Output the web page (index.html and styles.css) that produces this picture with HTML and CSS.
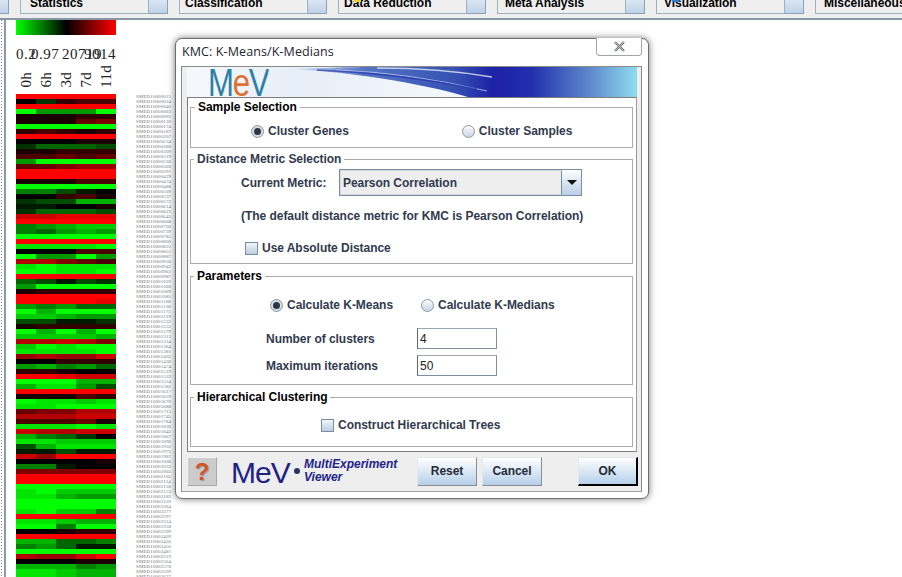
FILE: index.html
```html
<!DOCTYPE html>
<html lang="en">

<head>
    <meta charset="UTF-8">
    <title>KMC: K-Means/K-Medians</title>
    <link rel="stylesheet" href="styles.css">
</head>

<body>

    <div class="toolbar">
        <div class="tab-arrow tab-arrow--first"></div>
        <div class="tab"><div class="tab-box">Statistics</div><div class="tab-arrow"></div></div>
        <div class="tab"><div class="tab-box tab-box--narrow">Classification</div><div class="tab-arrow"></div></div>
        <div class="tab"><div class="tab-box tab-box--narrow"><i class="tab-icon tab-icon--yellow"></i>Data Reduction</div><div class="tab-arrow"></div></div>
        <div class="tab"><div class="tab-box tab-box--mid">Meta Analysis</div><div class="tab-arrow"></div></div>
        <div class="tab"><div class="tab-box tab-box--mid"><i class="tab-icon tab-icon--blue"></i>Visualization</div><div class="tab-arrow"></div></div>
        <div class="tab"><div class="tab-box tab-box--misc">Miscellaneous</div><div class="tab-arrow"></div></div>
    </div>

    <div class="workspace">
        <div class="side-strip"></div>
        <div class="viewer">
            <div class="scale-bar"></div>
            <div class="scale-values">
                <span>0.2</span>
                <span class="scale-value--mid">0.97</span>
                <span class="scale-value--mid2">20719</span>
                <span class="scale-value--end">9014</span>
            </div>
            <div class="sample-names">
                <span>0h</span><span>6h</span><span>3d</span><span>7d</span><span>11d</span>
            </div>
            <div class="heatmap-row">
                <div id="heatmap" class="heatmap"></div>
                <div id="genes" class="genes"></div>
            </div>
        </div>
    </div>

    <div class="dialog">
        <div class="dialog-title">KMC: K-Means/K-Medians</div>
        <div class="dialog-close">
            <svg width="13" height="11" viewBox="0 0 13 11">
                <path d="M2 1 L11 10 M11 1 L2 10" stroke="#6f7378" stroke-width="2.4" fill="none"/>
                <path d="M2 1 L11 10 M11 1 L2 10" stroke="#d9dcdf" stroke-width="0.7" fill="none"/>
            </svg>
        </div>

        <div class="dialog-body">
            <div class="banner">
                <svg class="banner-art" width="450" height="30" viewBox="0 0 450 30">
                    <defs>
                        <linearGradient id="bannerBg" x1="0" x2="1" y1="0" y2="0">
                            <stop offset="0" stop-color="#f6f9fc"/>
                            <stop offset="0.25" stop-color="#e6eef7"/>
                            <stop offset="0.6" stop-color="#f4f8fc"/>
                            <stop offset="1" stop-color="#ffffff"/>
                        </linearGradient>
                        <linearGradient id="bannerEnd" x1="0" x2="1" y1="0" y2="0">
                            <stop offset="0" stop-color="#1e22a6"/>
                            <stop offset="0.25" stop-color="#2130ad"/>
                            <stop offset="0.65" stop-color="#5c86cb"/>
                            <stop offset="1" stop-color="#8edcef"/>
                        </linearGradient>
                        <linearGradient id="swoosh" x1="0" x2="1" y1="0" y2="0">
                            <stop offset="0" stop-color="#dfe7f5"/>
                            <stop offset="0.3" stop-color="#5676c4"/>
                            <stop offset="0.7" stop-color="#3550b2"/>
                            <stop offset="0.85" stop-color="#1e22a6"/>
                        </linearGradient>
                    </defs>
                    <rect width="450" height="30" fill="url(#bannerBg)"/>
                    <path d="M105 2 C160 5 230 15 281 30 L340 30 L340 0 L190 0 C160 0 130 1 105 2 Z" fill="url(#swoosh)"/>
                    <path d="M150 3 C200 5 250 12 300 24" stroke="#b9cbec" stroke-width="1.2" fill="none" opacity="0.8"/>
                    <path d="M130 3 C180 5 230 10 290 22" stroke="#2733ab" stroke-width="1.6" fill="none" opacity="0.7"/>
                    <path d="M190 1 C230 1 270 4 305 10" stroke="#dfe8f6" stroke-width="1.5" fill="none" opacity="0.8"/>
                    <rect x="310" width="140" height="30" fill="url(#bannerEnd)"/>
                </svg>
                <div class="banner-logo"><span>M</span><span class="banner-logo-e">e</span><span>V</span></div>
            </div>

            <div class="panel">
                <fieldset class="group group--sample">
                    <legend class="group-title group-title--first">Sample Selection</legend>
                    <div class="radio-row radio-row--sample">
                        <label class="choice"><span class="radio radio--on"></span>Cluster Genes</label>
                        <label class="choice"><span class="radio"></span>Cluster Samples</label>
                    </div>
                </fieldset>

                <fieldset class="group group--distance">
                    <legend class="group-title group-title--slate">Distance Metric Selection</legend>
                    <div class="metric-row">
                        <span class="metric-label">Current Metric:</span>
                        <div class="combo">
                            <div class="combo-value">Pearson Correlation</div>
                            <div class="combo-button"><i class="combo-caret"></i></div>
                        </div>
                    </div>
                    <p class="metric-note">(The default distance metric for KMC is Pearson Correlation)</p>
                    <label class="choice choice--absolute"><span class="check"></span>Use Absolute Distance</label>
                </fieldset>

                <fieldset class="group group--params">
                    <legend class="group-title">Parameters</legend>
                    <div class="radio-row radio-row--params">
                        <label class="choice"><span class="radio radio--on"></span>Calculate K-Means</label>
                        <label class="choice"><span class="radio"></span>Calculate K-Medians</label>
                    </div>
                    <div class="field-row field-row--first">
                        <span class="field-label">Number of clusters</span>
                        <div class="field-input">4</div>
                    </div>
                    <div class="field-row">
                        <span class="field-label">Maximum iterations</span>
                        <div class="field-input">50</div>
                    </div>
                </fieldset>

                <fieldset class="group group--hier">
                    <legend class="group-title">Hierarchical Clustering</legend>
                    <label class="choice choice--hier"><span class="check"></span>Construct Hierarchical Trees</label>
                </fieldset>
            </div>

            <div class="footer">
                <div class="help-button">?</div>
                <div class="mev-logo">MeV</div>
                <div class="mev-dot"></div>
                <div class="mev-name">MultiExperiment<br>Viewer</div>
                <div class="button button--reset">Reset</div>
                <div class="button button--cancel">Cancel</div>
                <div class="button button--ok">OK</div>
            </div>
        </div>
    </div>

    <script src="script.js"></script>

</body>

</html>
```

FILE: styles.css
```css
* {
    box-sizing: border-box;
}

html,
body {
    margin: 0;
    height: 577px;
    overflow: hidden;
    background-color: #fff;
}

body {
    font-family: "Liberation Sans", Arial, sans-serif;
    font-size: 12px;
    font-weight: bold;
    letter-spacing: -0.04px;
    color: #323a4e;
    position: relative;
}

/* top toolbar, cut off by the top of the window */
.toolbar {
    display: flex;
    gap: 11px;
    align-items: flex-end;
    height: 20px;
    padding-bottom: 4px;
    background-color: #eeeeee;
    border-bottom: 2px solid #8797a6;
    overflow: hidden;
    white-space: nowrap;
}

.tab {
    display: flex;
    flex: none;
    width: 148px;
    height: 20px;
}

.tab-box {
    position: relative;
    width: 129px;
    padding-left: 9px;
    line-height: 18px;
    color: #000;
    background-color: #efefef;
    border: 1px solid #9db0c4;
    border-top: 0;
}

.tab-box--narrow {
    padding-left: 5px;
}

.tab-box--mid {
    padding-left: 7px;
}

.tab-box--misc {
    padding-left: 8px;
}

.tab-arrow {
    flex: none;
    width: 19px;
    height: 20px;
    background: linear-gradient(#e6eef6, #bed3e8);
    border: 1px solid #8ea2b6;
    border-left: 0;
}

.tab-arrow--first {
    width: 9px;
}

.tab-icon {
    position: absolute;
    top: 6px;
    left: 15px;
    width: 7px;
    height: 2px;
}

.tab-icon--yellow {
    background-color: #f2d21a;
}

.tab-icon--blue {
    background-color: #2f7fd0;
}

/* viewer behind the dialog */
.workspace {
    display: flex;
    height: 557px;
}

.side-strip {
    flex: none;
    width: 6px;
    border-right: 2px solid #8a99ab;
    background-image: linear-gradient(#8d8d8d 50%, transparent 50%);
    background-size: 1px 3px;
    background-repeat: repeat-y;
    background-position: 1px 0;
}

.viewer {
    padding-left: 10px;
    font-family: "Liberation Serif", "Times New Roman", serif;
    font-weight: normal;
    color: #222;
}

.scale-bar {
    width: 100px;
    height: 15px;
    background: linear-gradient(to right, #00ff00, #000 50%, #ff0000);
}

.scale-values {
    position: relative;
    width: 100px;
    height: 14px;
    margin-top: 12px;
    font-size: 15px;
    line-height: 14px;
    letter-spacing: 0.5px;
    white-space: nowrap;
}

.scale-values span {
    position: absolute;
    left: 0;
    top: 0;
}

.scale-values .scale-value--mid {
    left: 15px;
}

.scale-values .scale-value--mid2 {
    left: 46px;
}

.scale-values .scale-value--end {
    left: 68px;
}

.sample-names {
    display: flex;
    align-items: flex-end;
    width: 100px;
    height: 28px;
    margin-top: -1px;
}

.sample-names span {
    width: 20px;
    text-align: right;
    line-height: 20px;
    font-size: 15px;
    letter-spacing: 0.3px;
    writing-mode: vertical-rl;
    transform: rotate(180deg);
}

.heatmap-row {
    display: flex;
    gap: 20px;
    margin-top: 6px;
}

.heatmap {
    width: 100px;
}

.heat-row {
    display: flex;
    height: 5px;
}

.heat-cell {
    width: 20px;
}

.genes {
    font-size: 5px;
    line-height: 5px;
    letter-spacing: 0.1px;
    color: #777;
}

/* dialog window */
.dialog {
    position: absolute;
    left: 175px;
    top: 38px;
    width: 474px;
    height: 461px;
    padding: 27px 6px 6px 5px;
    background-color: #fff;
    border: 1px solid #6e6e6e;
    border-radius: 7px;
    box-shadow: 0 0 7px rgba(0, 0, 0, 0.55);
}

.dialog-title {
    position: absolute;
    left: 6px;
    top: 4px;
    font-family: "Open Sans", "Liberation Sans", sans-serif;
    font-size: 12.5px;
    font-weight: normal;
    letter-spacing: 0.1px;
    color: #1d2433;
}

.dialog-close {
    position: absolute;
    top: -1px;
    right: 6px;
    display: flex;
    align-items: center;
    justify-content: center;
    width: 46px;
    height: 18px;
    background-color: #fff;
    border: 1px solid #a5a5a5;
    border-top: 0;
    border-radius: 0 0 4px 4px;
}

.dialog-body {
    height: 426px;
    padding: 0 4px 0 5px;
    background-color: #eeeeee;
    border: 1px solid #8a8a8a;
    border-bottom-color: #a0a0a0;
}

.banner {
    position: relative;
    height: 30px;
}

.banner-art {
    display: block;
}

.banner-logo {
    position: absolute;
    left: 21px;
    top: -3px;
    height: 32px;
    font-size: 38px;
    line-height: 38px;
    font-weight: normal;
    letter-spacing: -1.5px;
    color: #2f7fa8;
    transform: scaleX(0.82);
    transform-origin: left top;
    overflow: hidden;
}

.banner-logo-e {
    color: #e0702f;
}

.panel {
    height: 355px;
    padding: 2px 3px 0 2px;
    background-color: #fff;
    border: 1px solid #7c7c7c;
    border-right-color: #9a9a9a;
}

.group {
    margin: 0;
    padding: 0;
    border: 1px solid #ababab;
}

.group--sample {
    height: 48px;
}

.group--distance {
    height: 112px;
    margin-top: 4px;
}

.group--params {
    height: 116px;
    margin-top: 5px;
}

.group--hier {
    height: 57px;
    margin-top: 5px;
}

.group-title {
    margin-left: 3px;
    padding: 0 3px;
    line-height: 14px;
    font-size: 12px;
    color: #000;
}

.group-title--first {
    margin-left: 4px;
}

.group-title--slate {
    color: #323a4e;
}

.choice {
    display: flex;
    align-items: center;
    gap: 4px;
    line-height: 14px;
    white-space: nowrap;
}

.radio-row {
    display: flex;
}

.radio-row--sample {
    gap: 113px;
    padding: 10px 0 0 60px;
}

.radio-row--params {
    gap: 28px;
    padding: 15px 0 0 79px;
}

.radio {
    position: relative;
    width: 13px;
    height: 13px;
    background: linear-gradient(#fbfcfd, #c8d6e4);
    border: 1px solid #8b98a6;
    border-radius: 50%;
}

.radio--on {
    background: #d4dbe3;
}

.radio--on::after {
    content: "";
    position: absolute;
    left: 2px;
    top: 2px;
    width: 7px;
    height: 7px;
    background-color: #2d3542;
    border-radius: 50%;
}

.check {
    width: 13px;
    height: 13px;
    background: linear-gradient(#f0f4f8, #bccee0);
    border: 1px solid #7c8ca0;
}

.metric-row {
    display: flex;
    align-items: center;
    padding: 3px 0 0 50px;
}

.metric-label {
    width: 98px;
}

.combo {
    display: flex;
    width: 243px;
    height: 27px;
    background-color: #eeeeee;
    border: 1px solid #7a8ca0;
}

.combo-value {
    flex: 1;
    padding-left: 2px;
    line-height: 24px;
    border: 1px solid #cfd8e2;
    border-right: 1px solid #7a8ca0;
}

.combo-button {
    display: flex;
    align-items: center;
    justify-content: center;
    width: 19px;
    background: linear-gradient(#fdfeff, #b9cfe5);
}

.combo-caret {
    width: 0;
    height: 0;
    border-left: 5px solid transparent;
    border-right: 5px solid transparent;
    border-top: 5px solid #111;
}

.metric-note {
    margin: 13px 0 0 50px;
    line-height: 14px;
    white-space: nowrap;
}

.choice--absolute {
    padding: 18px 0 0 54px;
}

.field-row {
    display: flex;
    align-items: center;
    padding-left: 75px;
    margin-top: 6px;
}

.field-row--first {
    margin-top: 16px;
}

.field-label {
    width: 151px;
}

.field-input {
    width: 80px;
    height: 21px;
    padding-left: 2px;
    line-height: 20px;
    font-weight: normal;
    color: #222;
    background-color: #fff;
    border: 1px solid #7f90a3;
    border-top-color: #98a5b3;
    border-left-color: #5d6a78;
}

.choice--hier {
    padding: 14px 0 0 130px;
}

.footer {
    position: relative;
    height: 40px;
}

.help-button {
    position: absolute;
    left: 0;
    top: 5px;
    width: 30px;
    height: 29px;
    font-size: 24px;
    line-height: 28px;
    text-align: center;
    color: #d2552a;
    background-color: #cccccc;
    border: 1px solid #a9a9a9;
    border-top-color: #f4f4f4;
    border-left-color: #f4f4f4;
    text-shadow: 1px 1px 1px #999;
}

.mev-logo {
    position: absolute;
    left: 44px;
    top: 5px;
    font-size: 30px;
    line-height: 32px;
    font-weight: normal;
    letter-spacing: -1px;
    color: #1f2283;
}

.mev-dot {
    position: absolute;
    left: 107px;
    top: 16px;
    width: 6px;
    height: 6px;
    background-color: #2b3160;
    border-radius: 50%;
}

.mev-name {
    position: absolute;
    left: 117px;
    top: 6px;
    line-height: 13px;
    font-style: italic;
    letter-spacing: 0;
    color: #22248a;
}

.button {
    position: absolute;
    top: 5px;
    height: 29px;
    line-height: 27px;
    text-align: center;
    color: #262c38;
    background: linear-gradient(#ffffff, #b6d0ea);
    border: 1px solid #8d8d8d;
    border-top-color: #e8e8e8;
    border-left-color: #e8e8e8;
}

.button--reset {
    left: 230px;
    width: 60px;
}

.button--cancel {
    left: 295px;
    width: 60px;
}

.button--ok {
    left: 391px;
    width: 60px;
    border-right: 2px solid #000;
    border-bottom: 2px solid #000;
}
```

FILE: script.js
```js
// expression values, -10 (full green) to 10 (full red), one line per gene
var rows = [
    [10,10,10,10,10],[0,-2,2,3,3],[10,10,10,10,10],[-10,-6,-6,-6,-10],[1,1,1,2,2],
    [1,1,1,4,5],[-10,-10,-10,-10,-10],[2,3,2,1,2],[10,10,10,10,10],[0,0,0,1,1],
    [-2,-4,-4,-4,-3],[1,1,2,2,2],[3,3,4,3,4],[-6,-10,-10,-10,-10],[4,4,5,6,6],
    [10,10,10,10,10],[10,10,10,10,10],[1,1,1,3,3],[-10,-10,-10,-10,-10],[-5,-5,-3,-1,0],
    [0,0,2,3,1],[-2,-3,-3,-7,-7],[-1,-1,0,0,1],[-2,-4,-4,-4,-3],[8,8,9,9,9],
    [10,10,10,10,10],[-5,-6,-7,-8,-8],[-5,-4,-6,-7,-6],[-10,-10,-10,-10,-10],[10,10,10,10,10],
    [-9,-9,-9,-9,-10],[0,0,0,3,3],[-10,-6,-6,-10,-6],[7,7,5,4,3],[-9,-10,-9,-9,-9],
    [-10,-10,-9,-9,-10],[10,10,10,10,10],[-4,-3,-1,-3,-2],[-6,-10,-10,-10,-10],[1,2,2,2,2],
    [10,10,10,10,10],[10,10,10,10,9],[-6,-5,-6,-4,-4],[-10,-7,-10,-10,-10],[-8,-8,-7,-6,-6],
    [-3,-3,-1,-1,-2],[1,2,2,2,2],[-10,-7,-10,-7,-10],[-8,-8,-8,-8,-7],[7,7,8,7,5],
    [-8,-10,-9,-10,-10],[-9,-9,-9,-9,-10],[6,7,6,6,8],[0,0,2,2,2],[-6,-7,-5,-6,-4],
    [2,2,1,0,0],[10,10,9,8,8],[-10,-10,-10,-7,-7],[-7,-9,-9,-6,-3],[10,10,10,10,10],
    [1,1,1,3,2],[-10,-9,-9,-8,-9],[-9,-9,-10,-10,-10],[4,5,5,7,7],[7,7,7,8,8],
    [3,3,3,4,1],[-9,-9,-9,-10,-9],[8,7,7,8,8],[-7,-5,-4,-2,0],[-9,-9,-8,-8,-8],
    [-3,-7,-9,-9,-9],[-1,-1,-3,-1,-1],[8,6,10,10,10],[0,0,0,0,1],[-5,-5,-1,0,0],
    [5,5,5,5,5],[10,10,10,10,10],[10,10,10,10,10],[-10,-10,-10,-10,-10],[-9,-10,-8,-8,-8],
    [-9,-9,-7,-6,-6],[-10,-10,-10,-10,-10],[-10,-10,-10,-10,-10],[-9,-10,-8,-8,-5],[10,10,10,10,10],
    [-9,-9,-8,-7,-7],[-10,-10,-5,-10,-10],[0,0,1,2,2],[10,10,10,10,10],[-7,-7,-4,-4,-5],
    [-5,-6,-4,-1,-1],[-10,-10,-10,-10,-10],[7,6,6,8,10],[0,0,0,1,1],[-7,-7,-7,-5,-6],
    [-9,-9,-8,-7,-7],[-9,-9,-8,-7,-7]
];

function cellColor(v) {
    var level = Math.round(Math.abs(v) * 25.5);
    return v > 0 ? 'rgb(' + level + ',0,0)' : 'rgb(0,' + level + ',0)';
}

var heatmap = document.getElementById('heatmap');
var genes = document.getElementById('genes');
var geneId = 15;

rows.forEach(function (row, i) {
    var rowEl = document.createElement('div');
    rowEl.className = 'heat-row';
    row.forEach(function (v) {
        var cell = document.createElement('div');
        cell.className = 'heat-cell';
        cell.style.backgroundColor = cellColor(v);
        rowEl.appendChild(cell);
    });
    heatmap.appendChild(rowEl);

    var label = document.createElement('div');
    label.textContent = 'SMED1' + String(geneId).padStart(7, '0');
    genes.appendChild(label);
    geneId += 9 + (i * 7) % 38;
});
```
